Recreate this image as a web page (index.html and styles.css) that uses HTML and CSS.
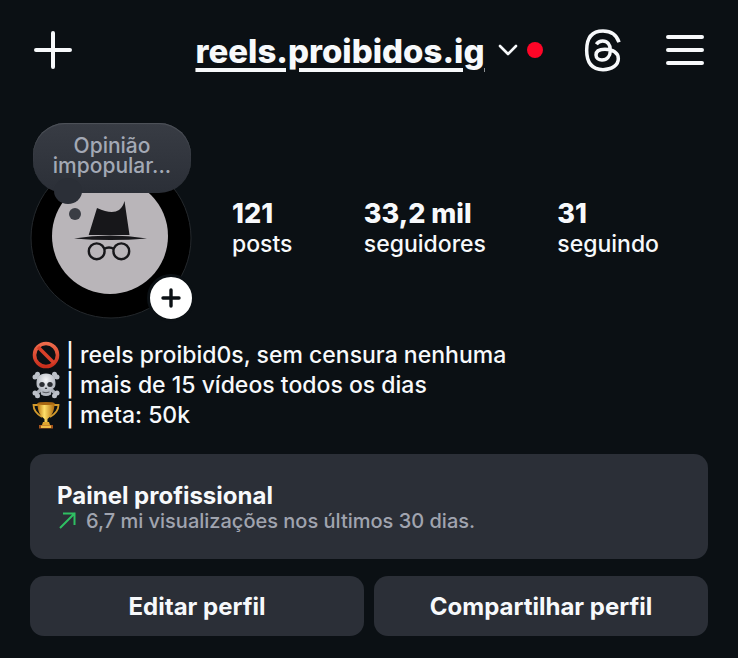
FILE: index.html
```html
<!DOCTYPE html>
<html lang="pt-BR">
<head>
  <meta charset="UTF-8">
  <meta name="viewport" content="width=device-width, initial-scale=1.0">
  <title>reels.proibidos.ig</title>
  <link rel="stylesheet" href="styles.css">
</head>
<body>
  <header class="topbar">
    <button class="icon-btn" aria-label="Criar">
      <svg width="38" height="38" viewBox="0 0 38 38"><path d="M19 2v34M2 19h34" stroke="#f7f9fb" stroke-width="4" stroke-linecap="round"/></svg>
    </button>
    <button class="account">
      <span class="username">reels.proibidos.ig</span>
      <svg width="20" height="14" viewBox="0 0 20 14"><path d="M2 3l8 8 8-8" fill="none" stroke="#f7f9fb" stroke-width="2.6" stroke-linecap="round" stroke-linejoin="round"/></svg>
      <span class="dot"></span>
    </button>
    <nav class="actions">
      <button class="icon-btn" aria-label="Threads">
        <svg width="38" height="43" viewBox="41 26 114 129"><path d="M146 66C139 43 122 32 98 32 64 32 49 54 49 90s15 58 49 58c27 0 46-14 46-33 0-18-17-28-40-28-17 0-27 6-27 17 0 9 8 15 18 15 15 0 25-11 25-29s-9-28-23-28c-9 0-15 4-19 10" fill="none" stroke="#f7f9fb" stroke-width="10.500"/></svg>
      </button>
      <button class="icon-btn" aria-label="Menu">
        <svg width="38" height="32" viewBox="0 0 38 32"><path d="M2 3h34M2 16h34M2 29h34" stroke="#f7f9fb" stroke-width="4" stroke-linecap="round"/></svg>
      </button>
    </nav>
  </header>

  <main>
    <section class="profile">
      <div class="avatar">
        <svg width="162" height="162" viewBox="0 0 162 162">
          <circle cx="81" cy="80" r="80" fill="#000" stroke="#24282c" stroke-width="1"/>
          <circle cx="80" cy="78" r="58" fill="#b9b5b9"/>
          <path d="M67 50q15 7 22 2 4-3 5.500-9l5 34H58.700z" fill="#17171a"/>
          <path d="M44 80.500q36-6 73 0-37 3-73 0z" fill="#17171a"/>
          <g fill="none" stroke="#17171a" stroke-width="2.400">
            <circle cx="66.700" cy="93.300" r="7.900"/>
            <circle cx="91.300" cy="93.300" r="7.900"/>
            <path d="M74 91q5-3 10 0"/>
          </g>
        </svg>
        <div class="note">Opinião impopular...</div>
        <button class="add" aria-label="Adicionar story">
          <svg width="20" height="20" viewBox="0 0 20 20"><path d="M10 2v16M2 10h16" stroke="#0b1014" stroke-width="3.400" stroke-linecap="round"/></svg>
        </button>
      </div>
      <div class="stats">
        <a class="stat" href="#"><b>121</b>posts</a>
        <a class="stat" href="#"><b>33,2 mil</b>seguidores</a>
        <a class="stat" href="#"><b>31</b>seguindo</a>
      </div>
    </section>

    <section class="bio">
      <p>
        <svg class="emoji" viewBox="0 0 28 28">
          <defs><linearGradient id="red" x2="0" y2="1"><stop stop-color="#ee6b4c"/><stop offset="1" stop-color="#c92e1c"/></linearGradient></defs>
          <circle cx="14" cy="14" r="11.500" fill="none" stroke="url(#red)" stroke-width="3.600"/>
          <path d="M6 6l16 16" stroke="#d9402a" stroke-width="3.600"/>
        </svg>
        | reels proibid0s, sem censura nenhuma
      </p>
      <p>
        <svg class="emoji" viewBox="0 0 28 28">
          <defs><radialGradient id="bone" cy=".3"><stop stop-color="#f4f5f7"/><stop offset="1" stop-color="#b4b9c1"/></radialGradient></defs>
          <path d="M4 5l20 18M24 5L4 23" stroke="#a9aeb6" stroke-width="3.600" stroke-linecap="round"/>
          <g fill="#bcc1c9">
            <circle cx="5.500" cy="3.300" r="2.500"/><circle cx="3" cy="6" r="2.500"/>
            <circle cx="22.500" cy="3.300" r="2.500"/><circle cx="25" cy="6" r="2.500"/>
            <circle cx="3" cy="22" r="2.500"/><circle cx="5.500" cy="24.700" r="2.500"/>
            <circle cx="25" cy="22" r="2.500"/><circle cx="22.500" cy="24.700" r="2.500"/>
          </g>
          <path d="M14 2.500c6.500 0 9.500 4 9.500 9.500 0 4-1 5-4 6.500l-.5 5q-5 3-10 0l-.5-5c-3-1.500-4-2.500-4-6.500 0-5.500 3-9.500 9.500-9.500z" fill="url(#bone)"/>
          <ellipse cx="10" cy="13.500" rx="2.700" ry="2.500" fill="#2b2e33"/>
          <ellipse cx="18" cy="13.500" rx="2.700" ry="2.500" fill="#2b2e33"/>
          <path d="M14 16l-1.300 2h2.600z" fill="#2b2e33"/>
          <path d="M10.500 21q3.500 1.500 7 0" fill="none" stroke="#55585e" stroke-width="1"/>
        </svg>
        | mais de 15 vídeos todos os dias
      </p>
      <p>
        <svg class="emoji" viewBox="0 0 28 28">
          <defs><linearGradient id="gold"><stop stop-color="#b8720f"/><stop offset=".4" stop-color="#ffe06a"/><stop offset="1" stop-color="#b06a0c"/></linearGradient></defs>
          <path d="M6 4H1.500q0 7 8.500 12M22 4h4.500q0 7-8.500 12" fill="none" stroke="#d39a2c" stroke-width="1.800"/>
          <path d="M5.500 2h17c0 9-3 13-7 16v4h-3v-4c-4-3-7-7-7-16z" fill="url(#gold)"/>
          <ellipse cx="14" cy="2.500" rx="8.500" ry="1.600" fill="#a96812"/>
          <path d="M11 21h6l1 3h-8z" fill="#e0a52e"/>
          <path d="M7 24h14v3.500H7z" fill="#a4531c"/>
          <path d="M9 24.500h10v2.500H9z" fill="#f0bd46"/>
        </svg>
        | meta: 50k
      </p>
    </section>

    <a class="panel" href="#">
      <strong>Painel profissional</strong>
      <span class="views">
        <svg width="20" height="20" viewBox="0 0 20 20"><path d="M3 17L18 2M6 2.500h11.500V14" fill="none" stroke="#2fbf62" stroke-width="2"/></svg>
        6,7 mi visualizações nos últimos 30 dias.
      </span>
    </a>

    <div class="buttons">
      <button>Editar perfil</button>
      <button>Compartilhar perfil</button>
    </div>
  </main>
</body>
</html>
```

FILE: styles.css
```css
* { box-sizing: border-box; margin: 0; padding: 0; }

body {
  font-family: Inter, "Liberation Sans", sans-serif;
  background-color: #0b1014;
  color: #f7f9fb;
}

svg { display: block; }

a {
  color: inherit;
  text-decoration: none;
}

button {
  font-family: inherit;
  color: inherit;
  background: none;
  border: none;
  cursor: pointer;
}

.topbar {
  display: grid;
  grid-template-columns: 1fr auto 1fr;
  align-items: center;
  height: 100px;
  padding: 0 34px;
}

.icon-btn { justify-self: start; }

.account {
  display: flex;
  align-items: center;
  gap: 13px;
}

.username {
  font-size: 33px;
  font-weight: 800;
  line-height: 40px;
  padding-top: 2px;
  text-decoration: underline;
  text-decoration-thickness: 4px;
  text-underline-offset: 5px;
}

.dot {
  width: 16px;
  height: 16px;
  margin-left: -4px;
  border-radius: 50%;
  background-color: #ff0527;
}

.actions {
  display: flex;
  align-items: center;
  justify-content: flex-end;
  gap: 44px;
}

main { padding: 0 30px 22px; }

.profile {
  display: flex;
  align-items: center;
  gap: 40px;
  padding-top: 58px;
}

.avatar {
  position: relative;
  flex: none;
}

/* speech bubble over the photo */
.note {
  position: absolute;
  top: -35px;
  left: 3px;
  width: 158px;
  height: 70px;
  padding: 13px 10px;
  border-radius: 32px;
  background: linear-gradient(#383c44, #2b2f37);
  box-shadow: inset 0 1px 1px #50545b;
  color: #a3a9b5;
  font-size: 21px;
  font-weight: 500;
  line-height: 20px;
  text-align: center;
}

.note::before,
.note::after {
  content: "";
  position: absolute;
  border-radius: 50%;
  background-color: #2b2f37;
}

.note::before {
  left: 21px;
  top: 55px;
  width: 28px;
  height: 26px;
}

.note::after {
  left: 36px;
  top: 85px;
  width: 12px;
  height: 12px;
  background-color: #3a3d44;
}

.add {
  position: absolute;
  right: -3px;
  bottom: -2px;
  display: grid;
  place-items: center;
  width: 48px;
  height: 48px;
  border: 3px solid #0b1014;
  border-radius: 50%;
  background-color: #fff;
}

.stats {
  flex: 1;
  display: flex;
  justify-content: space-between;
  padding-right: 49px;
  margin-top: -20px;
}

.stat {
  font-size: 23px;
  font-weight: 500;
  line-height: 30px;
}

.stat b {
  display: block;
  font-size: 27px;
  font-weight: 800;
}

.bio {
  padding-top: 20px;
  font-size: 23px;
  font-weight: 500;
  line-height: 30px;
}

.bio p {
  display: flex;
  align-items: center;
  gap: 6px;
  padding-left: 2px;
}

.emoji {
  width: 28px;
  height: 28px;
}

.panel {
  display: block;
  margin-top: 24px;
  padding: 29px 27px 26px;
  border-radius: 14px;
  background-color: #2b2f37;
}

.panel strong {
  display: block;
  font-size: 24px;
  font-weight: 700;
  line-height: 26px;
}

.views {
  display: flex;
  align-items: center;
  gap: 9px;
  color: #a0a4af;
  font-size: 20px;
  font-weight: 500;
  line-height: 24px;
}

.buttons {
  display: flex;
  gap: 10px;
  margin-top: 17px;
}

.buttons button {
  flex: 1;
  height: 60px;
  border-radius: 14px;
  background-color: #2b2f37;
  font-size: 24px;
  font-weight: 700;
}
```
